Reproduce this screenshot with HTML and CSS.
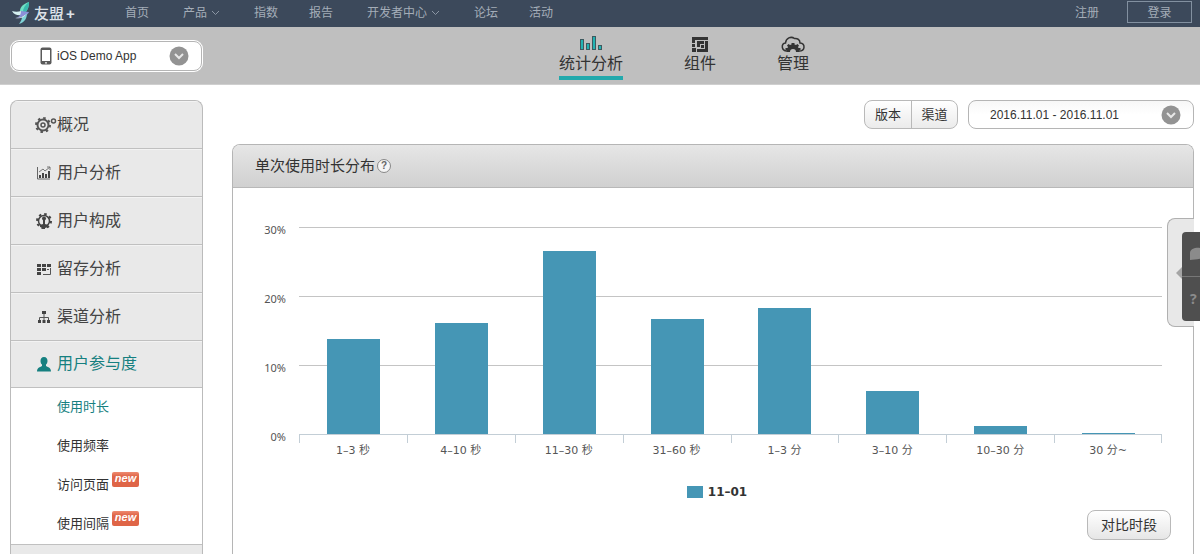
FILE: index.html
```html
<!DOCTYPE html>
<html lang="zh-CN">
<head>
<meta charset="utf-8">
<meta name="viewport" content="width=device-width, initial-scale=1">
<title>使用时长 - 友盟+</title>
<link rel="stylesheet" href="styles.css">
</head>
<body>
<header class="topbar">
  <a class="logo" href="#">
    <svg class="logo-mark" viewBox="0 0 20 22" aria-hidden="true">
      <path d="M17 0C11 2 8 5 8 9l5 2c3-3 4-7 4-11z" fill="#6fe0c4"/>
      <path d="M17 0c-4 3-6 6-6 10l2 1c3-3 4-7 4-11z" fill="#39b8ad"/>
      <path d="M0 9c3 1 6 1 9 0l2 4c-5 1-9 0-11-4z" fill="#d5f0f0"/>
      <path d="M9 9l8 1c-1 3-5 5-13 6 3-1 5-3 5-7z" fill="#8b8fd8"/>
      <path d="M15 11c0 5-2 9-8 11 2-3 3-5 3-7 2-1 4-2 5-4z" fill="#7fd3d6"/>
      <path d="M3 16c4 0 8-1 11-4-2 4-6 5-11 4z" fill="#e9f4fa"/>
    </svg>
    <span>友盟</span><span class="logo-plus">+</span>
  </a>
  <nav class="topnav" aria-label="主导航">
    <a href="#">首页</a>
    <a class="has-menu" href="#">产品<svg class="caret" viewBox="0 0 9 6" aria-hidden="true"><path d="M1 1l3.500 3.500L8 1"/></svg></a>
    <a href="#">指数</a>
    <a href="#">报告</a>
    <a class="has-menu" href="#">开发者中心<svg class="caret" viewBox="0 0 9 6" aria-hidden="true"><path d="M1 1l3.500 3.500L8 1"/></svg></a>
    <a href="#">论坛</a>
    <a href="#">活动</a>
  </nav>
  <div class="account">
    <a href="#">注册</a>
    <a class="login" href="#">登录</a>
  </div>
</header>

<div class="appbar">
  <div class="picker app-picker">
    <select aria-label="应用"><option>iOS Demo App</option></select>
    <svg class="phone" viewBox="0 0 12 18" aria-hidden="true"><rect x="0.500" y="0.500" width="11" height="17" rx="2" fill="#5a5a5a"/><rect x="2" y="3" width="8" height="11" fill="#fff"/><circle cx="6" cy="15.800" r="0.900" fill="#fff"/></svg>
    <svg class="drop" viewBox="0 0 20 20" aria-hidden="true"><circle cx="10" cy="10" r="9.500" fill="#939393"/><path d="M6 8l4 4 4-4" fill="none" stroke="#e8e8e8" stroke-width="2"/></svg>
  </div>
  <nav class="tabs" aria-label="功能">
    <a class="tab active" href="#">
      <svg viewBox="0 0 26 18" aria-hidden="true"><g fill="#22b3b3" stroke="#3d5a60"><rect x="2.500" y="4.500" width="3" height="10"/><rect x="8.500" y="8.500" width="3" height="6"/><rect x="14.500" y="1.500" width="3" height="13"/><rect x="20.500" y="10.500" width="3" height="4"/></g></svg>
      <span>统计分析</span>
    </a>
    <a class="tab" href="#">
      <svg viewBox="0 0 26 18" aria-hidden="true"><g fill="#333"><path d="M5 2h16v3H8v3H5zM5 9h3v3H5zM5 13h4v4H5z"/><path d="M10 6h7v3h-4v3h-3zM18 6h3v11H10v-3h8zM14 10h3v3h-3z"/></g></svg>
      <span>组件</span>
    </a>
    <a class="tab" href="#">
      <svg viewBox="0 0 26 18" aria-hidden="true"><path d="M7 16C1 16 1 8.500 5.500 8 6 3 11 1 14.500 3.500c3-.500 5.500 1.500 5.500 4.500 5.500.500 5.500 8-1 8" fill="none" stroke="#333" stroke-width="1.500"/><path d="M6.500 17l.500-2H5.500v-2h2l.500-1-1-1.500L8.500 9l1.500 1 1.500-.500V8h3v1.500L16 10l1.500-1 1.500 1.500-1 1.500.500 1h2v2H19l.500 2H16a3 3 0 0 0-6 0z" fill="#333"/></svg>
      <span>管理</span>
    </a>
  </nav>
</div>

<div class="page">
  <aside class="sidebar">
    <nav aria-label="报表">
      <a class="item" href="#"><svg class="wide" viewBox="0 0 22 16" aria-hidden="true"><g fill="none" stroke="#555"><circle cx="8" cy="8" r="5.500" stroke-width="2"/><circle cx="8" cy="8" r="7" stroke-width="2" stroke-dasharray="2.500 3"/><circle cx="8" cy="8" r="2" stroke-width="1.500"/><circle cx="18.500" cy="4" r="2" stroke-width="1.500"/></g></svg>概况</a>
      <a class="item" href="#"><svg viewBox="0 0 16 16" aria-hidden="true"><path d="M1.500 2v12H14" fill="none" stroke="#666"/><path d="M3 10h2v3H3zM6 8h2v5H6zM9 9h2v4H9zM12 6h2v7h-2z" fill="#444"/><path d="M3 7l4-3 2 2 5-4M11 2h3v3" fill="none" stroke="#777"/></svg>用户分析</a>
      <a class="item" href="#"><svg viewBox="0 0 16 16" aria-hidden="true"><g fill="none" stroke="#444"><circle cx="8" cy="8" r="5.500" stroke-width="1.500"/><circle cx="8" cy="8" r="7" stroke-width="2" stroke-dasharray="2.500 3"/></g><circle cx="8" cy="5.500" r="2" fill="#444"/><path d="M7 7h2v4l3 1v2l-3 1v1H7v-1l-3-1v-2l3-1z" fill="#444"/></svg>用户构成</a>
      <a class="item" href="#"><svg viewBox="0 0 16 16" aria-hidden="true"><path d="M1 3h4v3H1zM6 3h4v3H6zM11 3h4v3h-4zM1 7h4v3H1zM6 7h4v3H6zM1 11h4v3H1z" fill="#444"/><path d="M14.500 7v6.500H7M11 8.500h2" fill="none" stroke="#555"/></svg>留存分析</a>
      <a class="item" href="#"><svg viewBox="0 0 16 16" aria-hidden="true"><path d="M6 2h4v3H6zM2 11h3v3H2zM6.500 11h3v3h-3zM11 11h3v3h-3z" fill="#444"/><path d="M8 5v6M3.500 11V8.500h9V11" fill="none" stroke="#555"/></svg>渠道分析</a>
      <a class="item current" href="#"><svg viewBox="0 0 16 16" aria-hidden="true"><path d="M8 1c2.500 0 3.500 2 3.500 4 0 1.500-.700 3-1.500 3.500V10c1 1 5 1 5 5.500H1C1 11 5 11 6 10V8.500C5.200 8 4.500 6.500 4.500 5c0-2 1-4 3.500-4z" fill="#168080"/></svg>用户参与度</a>
      <div class="submenu">
        <a class="current" href="#">使用时长</a>
        <a href="#">使用频率</a>
        <a href="#">访问页面<span class="badge">new</span></a>
        <a href="#">使用间隔<span class="badge">new</span></a>
      </div>
    </nav>
  </aside>

  <main class="main">
    <div class="toolbar">
      <div class="segmented"><button type="button">版本</button><button type="button">渠道</button></div>
      <div class="picker date-picker">
        <select aria-label="日期范围"><option>2016.11.01 - 2016.11.01</option></select>
        <svg class="drop" viewBox="0 0 20 20" aria-hidden="true"><circle cx="10" cy="10" r="9.500" fill="#939393"/><path d="M6 8l4 4 4-4" fill="none" stroke="#e8e8e8" stroke-width="2"/></svg>
      </div>
    </div>

    <section class="panel">
      <header class="panel-head">
        <h1>单次使用时长分布</h1>
        <button class="help" type="button" aria-label="帮助">?</button>
      </header>
      <div class="chart">
        <div class="y-axis"><span>30%</span><span>20%</span><span>10%</span><span>0%</span></div>
        <div class="plot">
          <div class="area">
            <div class="grid"><i></i><i></i><i></i></div>
            <div class="bars">
              <div class="bar" style="height:45.900%"></div>
              <div class="bar" style="height:53.400%"></div>
              <div class="bar" style="height:88.600%"></div>
              <div class="bar" style="height:55.800%"></div>
              <div class="bar" style="height:61%"></div>
              <div class="bar" style="height:21%"></div>
              <div class="bar" style="height:4%"></div>
              <div class="bar" style="height:0.700%"></div>
            </div>
          </div>
          <div class="ticks"><i></i><i></i><i></i><i></i><i></i><i></i><i></i><i></i></div>
          <div class="x-axis"><span>1–3 秒</span><span>4–10 秒</span><span>11–30 秒</span><span>31–60 秒</span><span>1–3 分</span><span>3–10 分</span><span>10–30 分</span><span>30 分~</span></div>
        </div>
      </div>
      <div class="legend"><i></i><span>11–01</span></div>
      <div class="panel-foot"><button class="compare" type="button">对比时段</button></div>
    </section>

    <div class="dock">
      <svg class="dock-arrow" viewBox="0 0 6 12" aria-hidden="true"><path d="M6 0v12L0 6z" fill="#a5a5a5"/></svg>
      <div class="dock-buttons">
        <button type="button" aria-label="反馈"><svg viewBox="0 0 16 14" aria-hidden="true"><path d="M0 13V6c0-7 16-7 16 0s-11 6-16 7z" fill="#8b8b8b"/></svg></button>
        <button type="button" aria-label="常见问题">?</button>
      </div>
    </div>
  </main>
</div>
</body>
</html>
```
FILE: styles.css
```css
* { box-sizing: border-box; }

body {
  margin: 0;
  min-height: 100vh;
  display: flex;
  flex-direction: column;
  background: #fff;
  color: #333;
  font: 13px/16px "Liberation Sans", "Noto Sans CJK SC", sans-serif;
}

a { color: inherit; text-decoration: none; }
button, select { font: inherit; color: inherit; margin: 0; }
svg { display: block; flex: none; }

/* Top bar */
.topbar {
  flex: none;
  display: flex;
  height: 27px;
  padding: 0 8px 0 12px;
  background: #3c495b;
  color: #a4adb8;
  font-size: 12px;
  line-height: 26px;
}
.logo {
  display: flex;
  width: 113px;
  gap: 2px;
  color: #dce2e8;
  font-size: 15px;
  font-weight: 500;
  line-height: 28px;
}
.logo-mark { width: 20px; height: 22px; margin-top: 2px; }
.logo-plus { font-weight: bold; }
.topnav { display: flex; gap: 31px; }
.has-menu { display: flex; align-items: center; gap: 4px; padding: 0 3px; height: 26px; }
.caret { width: 9px; height: 6px; fill: none; stroke: #8b96a4; }
.account { display: flex; gap: 28px; margin-left: auto; }
.login {
  width: 65px;
  height: 22px;
  margin-top: 1px;
  border: 1px solid #8290a0;
  line-height: 22px;
  text-align: center;
}

/* Application bar */
.appbar {
  flex: none;
  display: flex;
  align-items: flex-start;
  height: 58px;
  padding-left: 10px;
  background: #bfbfbf;
  border-bottom: 1px solid #cfcfcf;
}
.picker { display: grid; align-items: center; }
.picker > * { grid-area: 1 / 1; }
.picker select {
  appearance: none;
  width: 100%;
  height: 100%;
  border: 1px solid #b5b5b5;
  border-radius: 8px;
  background: #fff;
  outline: none;
  font-size: 12px;
}
.drop { width: 20px; height: 20px; justify-self: end; margin-right: 13px; pointer-events: none; }
.app-picker {
  width: 193px;
  height: 32px;
  margin-top: 13px;
  padding: 1px;
  border-radius: 9px;
  background: #fff;
}
.app-picker select { padding: 0 45px; }
.phone { width: 12px; height: 18px; margin-left: 29px; pointer-events: none; }
.tabs { display: flex; gap: 61px; margin: 8px 0 0 356px; }
.tab { display: flex; flex-direction: column; align-items: center; font-size: 16px; line-height: 22px; }
.tab svg { width: 26px; height: 18px; }
.tab span { padding-bottom: 1px; border-bottom: 4px solid transparent; }
.tab.active span { border-color: #22a9ac; }

/* Page columns */
.page { flex: 1; display: flex; gap: 30px; padding: 15px 6px 0 10px; }
.sidebar {
  flex: none;
  width: 193px;
  border: 1px solid #bbb;
  border-bottom: 0;
  border-radius: 8px 8px 0 0;
  background: #e9e9e9;
  overflow: hidden;
}
.item {
  display: flex;
  align-items: center;
  height: 48px;
  padding-left: 46px;
  border-bottom: 1px solid #c0c0c0;
  box-shadow: inset 0 1px #f3f3f3;
  color: #444;
  font-size: 16px;
}
.item svg { width: 16px; height: 16px; margin: 0 5px 0 -21px; }
.item .wide { width: 22px; margin: 0 0 0 -22px; }
.item.current, .submenu .current { color: #168080; }
.item.current { height: 47px; }
.submenu { border-bottom: 1px solid #c0c0c0; background: #fff; }
.submenu a { display: flex; align-items: flex-start; gap: 3px; height: 39px; padding-left: 46px; line-height: 37px; }
.badge {
  width: 27px;
  height: 15px;
  margin-top: 6px;
  border-radius: 2px;
  background: linear-gradient(#ee8a70, #df6547 30%);
  color: #fff;
  font-size: 11px;
  font-style: italic;
  font-weight: bold;
  line-height: 13px;
  text-align: center;
}

/* Main column */
.main { position: relative; flex: 1; min-width: 0; margin-left: -1px; display: flex; flex-direction: column; gap: 15px; }
.toolbar { flex: none; display: flex; justify-content: flex-end; gap: 10px; height: 29px; }
.segmented {
  display: flex;
  border: 1px solid #b9b9b9;
  border-radius: 8px;
  background: linear-gradient(#fff, #ebebeb);
  overflow: hidden;
}
.segmented button { width: 46px; padding: 0; border: 0; background: none; }
.segmented button + button { border-left: 1px solid #b9b9b9; }
.date-picker { width: 226px; }
.date-picker select { padding: 0 21px; background: linear-gradient(#f7f7f7, #fff 50%); }

.panel {
  flex: 1;
  display: flex;
  flex-direction: column;
  border: 1px solid #b5b5b5;
  border-bottom: 0;
  border-radius: 8px 8px 0 0;
}
.panel-head {
  display: flex;
  align-items: center;
  gap: 2px;
  height: 43px;
  padding-left: 22px;
  border-bottom: 1px solid #b8b8b8;
  border-radius: 7px 7px 0 0;
  background: linear-gradient(#e6e6e6, #d0d0d0);
}
.panel-head h1 { margin: 0; font-size: 15px; font-weight: normal; }
.help {
  width: 14px;
  height: 14px;
  padding: 0;
  border: 1px solid #888;
  border-radius: 50%;
  background: #f4f4f4;
  color: #666;
  font-size: 10px;
  font-weight: bold;
  line-height: 12px;
}

/* Chart */
.chart { display: flex; gap: 13px; padding: 34px 31px 0 23px; color: #555; font-family: "Noto Sans", "Noto Sans CJK SC", sans-serif; }
.y-axis { flex: none; width: 30px; font-size: 11px; text-align: right; }
.y-axis span { display: block; height: 69px; }
.y-axis span:last-child { height: 16px; }
.plot { flex: 1; padding-top: 5px; }
.area { display: grid; height: 208px; border-bottom: 1px solid #c3ced6; }
.grid, .bars { grid-area: 1 / 1; }
.grid i { display: block; height: 69px; border-top: 1px solid #c4c4c4; }
.bars, .ticks, .x-axis { display: grid; grid-template-columns: repeat(8, 1fr); }
.bars { align-items: end; justify-items: center; padding-left: 1px; z-index: 1; }
.bar { width: 49%; background: #4596b5; }
.ticks { height: 8px; }
.ticks i { border-left: 1px solid #c3ced6; }
.ticks i:last-child { border-right: 1px solid #c3ced6; }
.x-axis { font-size: 11px; line-height: 16px; text-align: center; font-family: "DejaVu Sans", "Noto Sans CJK SC", sans-serif; }
.legend {
  display: flex;
  align-items: center;
  justify-content: center;
  gap: 5px;
  padding: 25px 0 0 8px;
  font: bold 12px/16px "DejaVu Sans", sans-serif;
}
.legend i { width: 16px; height: 12px; background: #4596b5; }
.panel-foot { display: flex; justify-content: flex-end; padding: 10px 22px 0; }
.compare {
  width: 84px;
  height: 30px;
  padding: 0;
  border: 1px solid #b9b9b9;
  border-radius: 8px;
  background: linear-gradient(#fff, #e6e6e6);
  font-size: 14px;
}

/* Floating help dock on the panel edge */
.dock {
  position: absolute;
  top: 118px;
  right: 0;
  display: flex;
  align-items: center;
  width: 27px;
  height: 109px;
  padding-left: 8px;
  border: 1px solid #b0b0b0;
  border-right: 0;
  border-radius: 8px 0 0 8px;
  background: #e8e8e8;
}
.dock-arrow { width: 6px; height: 12px; }
.dock-buttons { flex: none; width: 18px; margin-top: 8px; border-radius: 4px 0 0 4px; background: #4f4f4f; overflow: hidden; }
.dock-buttons button {
  display: flex;
  align-items: center;
  width: 100%;
  height: 44px;
  padding: 0 0 0 8px;
  border: 0;
  background: none;
  color: #8b8b8b;
  font: bold 14px/16px "Noto Sans", sans-serif;
}
.dock-buttons button + button { height: 45px; border-top: 1px solid #777; }
.dock-buttons svg { width: 16px; height: 14px; }
```
